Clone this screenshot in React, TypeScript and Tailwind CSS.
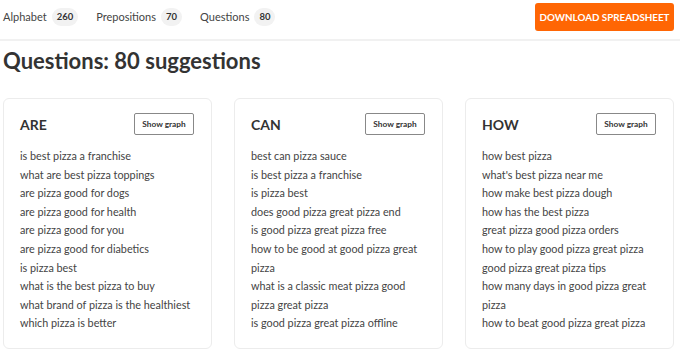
import React from "react";

const cards = [
  {
    title: "ARE",
    items: [
      "is best pizza a franchise",
      "what are best pizza toppings",
      "are pizza good for dogs",
      "are pizza good for health",
      "are pizza good for you",
      "are pizza good for diabetics",
      "is pizza best",
      "what is the best pizza to buy",
      "what brand of pizza is the healthiest",
      "which pizza is better",
    ],
  },
  {
    title: "CAN",
    items: [
      "best can pizza sauce",
      "is best pizza a franchise",
      "is pizza best",
      "does good pizza great pizza end",
      "is good pizza great pizza free",
      "how to be good at good pizza great pizza",
      "what is a classic meat pizza good pizza great pizza",
      "is good pizza great pizza offline",
    ],
  },
  {
    title: "HOW",
    items: [
      "how best pizza",
      "what's best pizza near me",
      "how make best pizza dough",
      "how has the best pizza",
      "great pizza good pizza orders",
      "how to play good pizza great pizza",
      "good pizza great pizza tips",
      "how many days in good pizza great pizza",
      "how to beat good pizza great pizza",
    ],
  },
];

function Tab({ label, count }: { label: string; count: string }) {
  return (
    <div className="flex items-center gap-[5px]">
      <span className="text-[11px] text-[#444]">{label}</span>
      <span className="flex h-[18px] min-w-[20px] items-center justify-center rounded-full bg-[#f2f2f2] px-[5px] text-[9.5px] font-bold text-[#333]">
        {count}
      </span>
    </div>
  );
}

export default function App() {
  return (
    <div
      className="w-[680px] h-[351px] overflow-hidden bg-white"
      style={{ fontFamily: "Lato, 'Liberation Sans', sans-serif" }}
    >
      <div className="flex h-[41px] items-start justify-between border-b-2 border-[#f1f1f1] pl-[3px] pr-[6px]">
        <div className="flex h-[34px] items-center gap-[18px]">
          <Tab label="Alphabet" count="260" />
          <Tab label="Prepositions" count="70" />
          <Tab label="Questions" count="80" />
        </div>
        <button className="mt-[3px] h-[28px] w-[139px] whitespace-nowrap rounded-[3px] bg-[#ff6604] text-[9.8px] font-bold uppercase text-white">
          Download Spreadsheet
        </button>
      </div>
      <h1 className="mt-[6px] pl-[3px] text-[22px] font-bold leading-[28px] text-[#333]">
        Questions: 80 suggestions
      </h1>
      <div className="mt-[23px] flex gap-[22px] pl-[3px]">
        {cards.map((c) => (
          <div
            key={c.title}
            className="h-[251px] w-[209px] rounded-[6px] border border-[#ececec] px-[16px] pt-[14px]"
          >
            <div className="flex items-center justify-between pr-[1px]">
              <span className="text-[14px] font-bold text-[#333]">{c.title}</span>
              <button className="h-[22px] w-[60px] rounded-[2px] border border-[#888] text-[8.3px] font-bold text-[#333]">
                Show graph
              </button>
            </div>
            <ul className="mt-[12px]">
              {c.items.map((it, i) => (
                <li key={i} className="text-[10.8px] leading-[18.6px] text-[#444]">
                  {it}
                </li>
              ))}
            </ul>
          </div>
        ))}
      </div>
    </div>
  );
}
